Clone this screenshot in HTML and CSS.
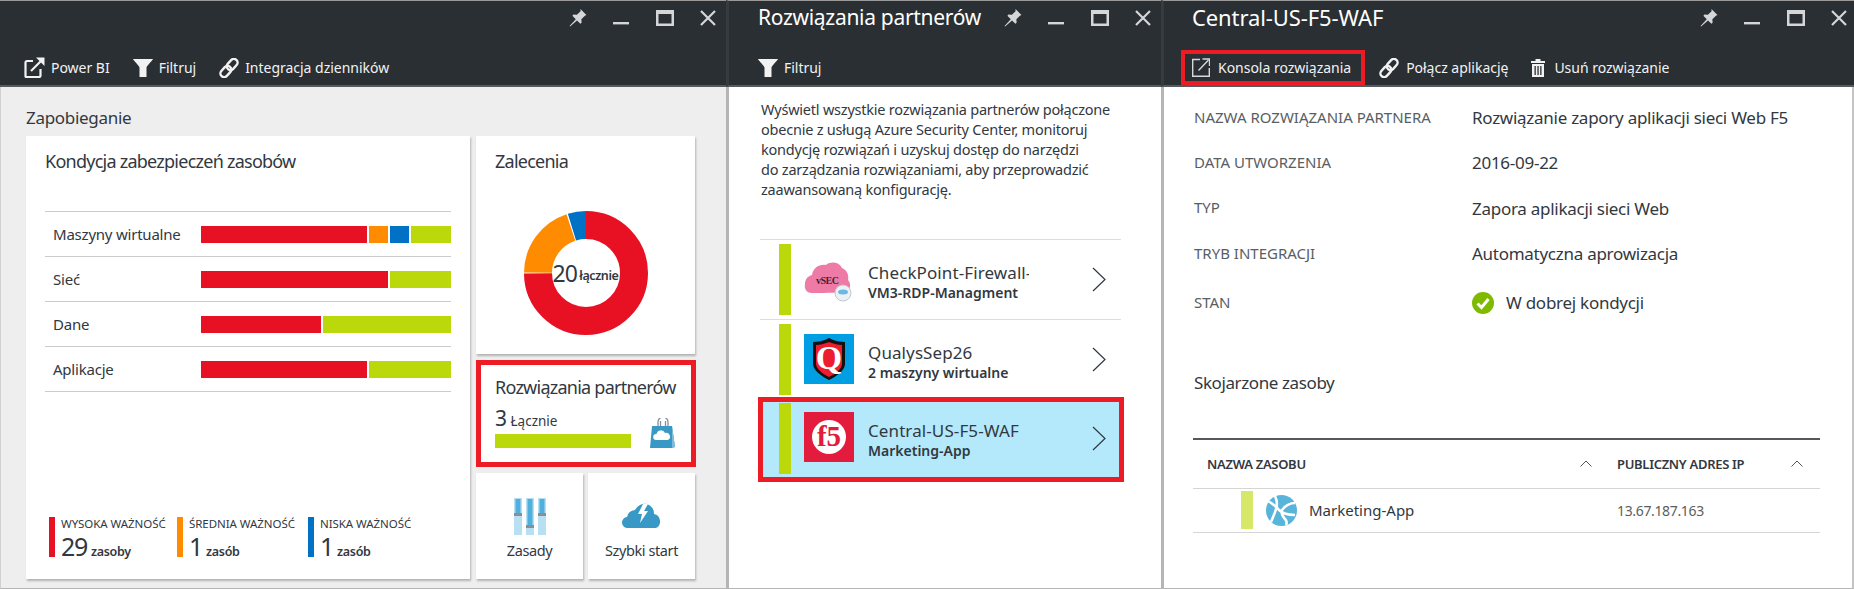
FILE: index.html
```html
<!DOCTYPE html>
<html lang="pl">
<head>
    <meta charset="UTF-8">
    <title>Rozwiązania partnerów</title>
    <link rel="stylesheet" href="styles.css">
</head>
<body>
    <svg class="defs" width="0" height="0">
        <symbol id="i-pin" viewBox="0 0 16 16"><path d="M10.2 0l5.3 5.300-1.300.6-3.200 3.300.2 3-1.100 1-3-3L1 15.500l-.5-.5L6 9 3 6l1-1.100 3 .2 3.300-3.200z"/></symbol>
        <symbol id="i-min" viewBox="0 0 16 16"><rect x="0" y="12" width="16" height="2.400"/></symbol>
        <symbol id="i-max" viewBox="0 0 18 16"><path fill-rule="evenodd" d="M0 0h18v16H0zM2.500 4v9.500h13V4z"/></symbol>
        <symbol id="i-close" viewBox="0 0 16 16"><path d="M1 1l14 14M15 1L1 15" fill="none" stroke="currentColor" stroke-width="2.200"/></symbol>
        <symbol id="i-filter" viewBox="0 0 20 18"><path d="M0 0h20c0 1-6.500 7-6.500 8.500V18h-7V8.500C6.500 7 0 1 0 0z"/></symbol>
        <symbol id="i-link" viewBox="0 0 20 20"><g transform="rotate(-48 10 10)" fill="none" stroke="currentColor" stroke-width="2.400"><rect x="-1" y="6.300" width="12.500" height="7.400" rx="3.700"/><rect x="8.500" y="6.300" width="12.500" height="7.400" rx="3.700"/></g></symbol>
    </svg>

    <section class="panel panel-first">
        <header class="panel-head">
            <div class="title-row">
                <div class="win-btns">
                    <span class="win-btn"><svg width="18" height="18"><use href="#i-pin"/></svg></span>
                    <span class="win-btn"><svg width="16" height="16"><use href="#i-min"/></svg></span>
                    <span class="win-btn"><svg width="18" height="16"><use href="#i-max"/></svg></span>
                    <span class="win-btn"><svg width="16" height="16"><use href="#i-close"/></svg></span>
                </div>
            </div>
            <div class="toolbar toolbar-first">
                <span class="tool">
                    <svg width="21" height="21" viewBox="0 0 21 21" fill="none" stroke="currentColor" stroke-width="2.200">
                        <path d="M9 4H3a1.500 1.500 0 0 0-1.500 1.500v13.500A1 1 0 0 0 3 20h12a1.500 1.500 0 0 0 1.500-1.500V12"/>
                        <path d="M7 14L17 4"/>
                        <path d="M12 0.500h8.500V9z" fill="currentColor" stroke="none"/>
                    </svg>
                    Power BI
                </span>
                <span class="tool"><svg width="20" height="18"><use href="#i-filter"/></svg>Filtruj</span>
                <span class="tool"><svg width="20" height="20"><use href="#i-link"/></svg>Integracja dzienników</span>
            </div>
        </header>
        <div class="panel-body body-grey">
            <h2 class="section-title">Zapobieganie</h2>
            <div class="dash">
                <div class="card card-health">
                    <h3 class="card-title">Kondycja zabezpieczeń zasobów</h3>
                    <div class="health-table">
                        <div class="health-row">
                            <span class="health-name">Maszyny wirtualne</span>
                            <div class="stack">
                                <i class="seg red" style="width:166px"></i><i class="seg orange" style="width:19px"></i><i class="seg blue" style="width:19px"></i><i class="seg green" style="width:40px"></i>
                            </div>
                        </div>
                        <div class="health-row">
                            <span class="health-name">Sieć</span>
                            <div class="stack"><i class="seg red" style="width:187px"></i><i class="seg green" style="width:61px"></i></div>
                        </div>
                        <div class="health-row">
                            <span class="health-name">Dane</span>
                            <div class="stack"><i class="seg red" style="width:120px"></i><i class="seg green" style="width:128px"></i></div>
                        </div>
                        <div class="health-row">
                            <span class="health-name">Aplikacje</span>
                            <div class="stack"><i class="seg red" style="width:166px"></i><i class="seg green" style="width:82px"></i></div>
                        </div>
                    </div>
                    <div class="legend">
                        <div class="legend-item">
                            <i class="legend-bar red"></i>
                            <div>
                                <div class="legend-label">WYSOKA WAŻNOŚĆ</div>
                                <div class="legend-count"><b>29</b> <span>zasoby</span></div>
                            </div>
                        </div>
                        <div class="legend-item">
                            <i class="legend-bar orange"></i>
                            <div>
                                <div class="legend-label">ŚREDNIA WAŻNOŚĆ</div>
                                <div class="legend-count"><b>1</b> <span>zasób</span></div>
                            </div>
                        </div>
                        <div class="legend-item">
                            <i class="legend-bar blue"></i>
                            <div>
                                <div class="legend-label">NISKA WAŻNOŚĆ</div>
                                <div class="legend-count"><b>1</b> <span>zasób</span></div>
                            </div>
                        </div>
                    </div>
                </div>
                <div class="side">
                    <div class="card card-rec">
                        <h3 class="card-title">Zalecenia</h3>
                        <div class="donut">
                            <svg width="124" height="124" viewBox="0 0 124 124" fill="none" stroke-width="28">
                                <g transform="rotate(-90 62 62)">
                                    <circle cx="62" cy="62" r="48" stroke="#e81123" stroke-dasharray="225.500 400"/>
                                    <circle cx="62" cy="62" r="48" stroke="#ff8c00" stroke-dasharray="59.500 400" stroke-dashoffset="-226.200"/>
                                    <circle cx="62" cy="62" r="48" stroke="#0072c6" stroke-dasharray="14.500 400" stroke-dashoffset="-286.800"/>
                                </g>
                            </svg>
                            <div class="donut-label"><b>20</b><span>łącznie</span></div>
                        </div>
                    </div>
                    <div class="card card-partner">
                        <h3 class="card-title">Rozwiązania partnerów</h3>
                        <div class="partner-meta">
                            <div>
                                <div class="partner-count"><b>3</b> Łącznie</div>
                                <div class="partner-bar"></div>
                            </div>
                            <svg width="26" height="30" viewBox="0 0 26 30">
                                <path d="M8 9V4a4 4 0 0 1 10 0v5M10.500 9V3M15.500 9V3" fill="none" stroke="#8a9097" stroke-width="1.300"/>
                                <path d="M2 8h20l3 21-3 1H0z" fill="#3999c6"/>
                                <path d="M22 8l3 21-3 1z" fill="#7fbcd9"/>
                                <path d="M6 22a3 3 0 0 1 .5-6 4.500 4.500 0 0 1 8.500-1 3.500 3.500 0 0 1 2.500 7z" fill="#fff"/>
                            </svg>
                        </div>
                    </div>
                    <div class="tiles">
                        <div class="card tile">
                            <svg width="40" height="37" viewBox="0 0 40 37">
                                <g fill="#b9dff2">
                                    <rect x="4" y="0" width="8" height="37"/><rect x="16" y="0" width="8" height="37"/><rect x="28" y="0" width="8" height="37"/>
                                </g>
                                <g fill="#4fb0de">
                                    <rect x="5.500" y="1" width="5" height="14"/><rect x="17.500" y="1" width="5" height="27"/><rect x="29.500" y="1" width="5" height="14"/>
                                </g>
                                <g fill="#8a8f94">
                                    <rect x="4" y="15" width="8" height="3"/><rect x="16" y="27" width="8" height="3"/><rect x="28" y="15" width="8" height="3"/>
                                </g>
                            </svg>
                            <span class="tile-name">Zasady</span>
                        </div>
                        <div class="card tile">
                            <svg width="40" height="37" viewBox="0 0 40 37">
                                <path d="M6 30a5.500 5.500 0 0 1-1-11 9 9 0 0 1 8-7 11 11 0 0 1 12-6 10 10 0 0 1 7 10 7.500 7.500 0 0 1 2 14z" fill="#3999c6"/>
                                <path d="M21 6l-5 10h4l-2 9 8-12h-4l4-7z" fill="#fff"/>
                            </svg>
                            <span class="tile-name">Szybki start</span>
                        </div>
                    </div>
                </div>
            </div>
        </div>
    </section>

    <section class="panel panel-second">
        <header class="panel-head">
            <div class="title-row">
                <h1 class="blade-title">Rozwiązania partnerów</h1>
                <div class="win-btns">
                    <span class="win-btn"><svg width="18" height="18"><use href="#i-pin"/></svg></span>
                    <span class="win-btn"><svg width="16" height="16"><use href="#i-min"/></svg></span>
                    <span class="win-btn"><svg width="18" height="16"><use href="#i-max"/></svg></span>
                    <span class="win-btn"><svg width="16" height="16"><use href="#i-close"/></svg></span>
                </div>
            </div>
            <div class="toolbar toolbar-second">
                <span class="tool"><svg width="20" height="18"><use href="#i-filter"/></svg>Filtruj</span>
            </div>
        </header>
        <div class="panel-body body-list">
            <p class="intro">Wyświetl wszystkie rozwiązania partnerów połączone<br>obecnie z usługą Azure Security Center, monitoruj<br>kondycję rozwiązań i uzyskuj dostęp do narzędzi<br>do zarządzania rozwiązaniami, aby przeprowadzić<br>zaawansowaną konfigurację.</p>
            <div class="partner-list">
                <div class="partner-row">
                    <i class="status-bar"></i>
                    <svg class="logo" width="50" height="50" viewBox="0 0 50 50">
                        <path d="M8 39c-6 0-8-5-7-9 0-5 3-8 7-9 1-7 7-11 14-10 5-4 13-3 16 3 5 2 7 7 6 12 3 3 3 9-1 11-2 2-30 2-35 2z" fill="#ee7ba5"/>
                        <text x="12" y="30" class="logo-vsec">vSEC</text>
                        <circle cx="39" cy="39" r="8" fill="#eef1f3" stroke="#c4c8cb"/>
                        <ellipse cx="39" cy="38" rx="5" ry="2.500" fill="#6cb8e8"/>
                    </svg>
                    <div class="partner-text">
                        <div class="partner-name name-clipped">CheckPoint-Firewall-Gateway</div>
                        <div class="partner-sub">VM3-RDP-Managment</div>
                    </div>
                    <svg class="chevron" width="14" height="25" viewBox="0 0 14 25"><path d="M1 1l12 11.500L1 24" fill="none" stroke="#32383f" stroke-width="1.200"/></svg>
                </div>
                <div class="partner-row">
                    <i class="status-bar"></i>
                    <svg class="logo" width="50" height="50" viewBox="0 0 50 50">
                        <rect width="50" height="50" fill="#009fe3"/>
                        <path d="M25 4c6 3 11 4 16 4v22c0 6-8 12-16 16C17 42 9 36 9 30V8c5 0 10-1 16-4z" fill="#111"/>
                        <path d="M25 8c5 2 9 3 13 3v19c0 5-7 10-13 13-6-3-13-8-13-13V11c4 0 8-1 13-3z" fill="#ed1c2e"/>
                        <text x="25" y="35" class="logo-q">Q</text>
                    </svg>
                    <div class="partner-text">
                        <div class="partner-name">QualysSep26</div>
                        <div class="partner-sub">2 maszyny wirtualne</div>
                    </div>
                    <svg class="chevron" width="14" height="25" viewBox="0 0 14 25"><path d="M1 1l12 11.500L1 24" fill="none" stroke="#32383f" stroke-width="1.200"/></svg>
                </div>
                <div class="partner-row row-selected">
                    <i class="status-bar"></i>
                    <svg class="logo" width="50" height="50" viewBox="0 0 50 50">
                        <rect width="50" height="50" fill="#e31c3d"/>
                        <circle cx="25" cy="25" r="17" fill="#fff"/>
                        <text x="25" y="34" class="logo-f5">f5</text>
                    </svg>
                    <div class="partner-text">
                        <div class="partner-name">Central-US-F5-WAF</div>
                        <div class="partner-sub">Marketing-App</div>
                    </div>
                    <svg class="chevron" width="14" height="25" viewBox="0 0 14 25"><path d="M1 1l12 11.500L1 24" fill="none" stroke="#32383f" stroke-width="1.200"/></svg>
                </div>
            </div>
        </div>
    </section>

    <section class="panel panel-third">
        <header class="panel-head">
            <div class="title-row">
                <h1 class="blade-title">Central-US-F5-WAF</h1>
                <div class="win-btns">
                    <span class="win-btn"><svg width="18" height="18"><use href="#i-pin"/></svg></span>
                    <span class="win-btn"><svg width="16" height="16"><use href="#i-min"/></svg></span>
                    <span class="win-btn"><svg width="18" height="16"><use href="#i-max"/></svg></span>
                    <span class="win-btn"><svg width="16" height="16"><use href="#i-close"/></svg></span>
                </div>
            </div>
            <div class="toolbar toolbar-third">
                <span class="tool tool-marked">
                    <svg width="18" height="19" viewBox="0 0 18 19" fill="none" stroke="#d8d8d8" stroke-width="1.400">
                        <path d="M8 1.500H.7v16.800h16.600V10"/>
                        <path d="M6.500 12.500L16.500 2"/>
                        <path d="M10.500 1h7v7"/>
                    </svg>
                    Konsola rozwiązania
                </span>
                <span class="tool"><svg width="20" height="20"><use href="#i-link"/></svg>Połącz aplikację</span>
                <span class="tool tool-trash">
                    <svg width="14" height="18" viewBox="0 0 14 18">
                        <path d="M4.500 0h5v2H14v2H0V2h4.500z"/>
                        <path fill-rule="evenodd" d="M1 5h12v13H1zM3.500 7v9h1.300V7zM6.400 7v9h1.300V7zM9.200 7v9h1.300V7z"/>
                    </svg>
                    Usuń rozwiązanie
                </span>
            </div>
        </header>
        <div class="panel-body body-detail">
            <dl class="props">
                <dt>NAZWA ROZWIĄZANIA PARTNERA</dt>
                <dd>Rozwiązanie zapory aplikacji sieci Web F5</dd>
                <dt>DATA UTWORZENIA</dt>
                <dd>2016-09-22</dd>
                <dt>TYP</dt>
                <dd>Zapora aplikacji sieci Web</dd>
                <dt>TRYB INTEGRACJI</dt>
                <dd>Automatyczna aprowizacja</dd>
                <dt class="prop-last">STAN</dt>
                <dd class="prop-last prop-state">
                    <svg width="22" height="22" viewBox="0 0 22 22">
                        <circle cx="11" cy="11" r="11" fill="#7fba00"/>
                        <path d="M5.500 11.500l4 4 7-8.500" fill="none" stroke="#fff" stroke-width="3"/>
                    </svg>
                    W dobrej kondycji
                </dd>
            </dl>
            <h2 class="linked-title">Skojarzone zasoby</h2>
            <div class="res-table">
                <div class="res-head">
                    <span class="res-th th-name">NAZWA ZASOBU
                        <svg width="12" height="7" viewBox="0 0 12 7"><path d="M.5 6.500L6 1l5.500 5.500" fill="none" stroke="#555" /></svg>
                    </span>
                    <span class="res-th th-ip">PUBLICZNY ADRES IP
                        <svg width="12" height="7" viewBox="0 0 12 7"><path d="M.5 6.500L6 1l5.500 5.500" fill="none" stroke="#555" /></svg>
                    </span>
                </div>
                <div class="res-row">
                    <div class="res-name">
                        <i class="res-bar"></i>
                        <svg width="31" height="31" viewBox="0 0 31 31">
                            <circle cx="15.500" cy="15.500" r="15.500" fill="#59b4d9"/>
                            <path d="M2 6c5 3 8 5 11 9 3 3 8 5 16 5M9 1c2 4 3 7 1 13-1 4-3 8-5 13M29 8c-5 0-10 3-13 7-1 2 0 6 3 9 2 2 2 4 1 6" fill="none" stroke="#fff" stroke-width="2.600"/>
                        </svg>
                        Marketing-App
                    </div>
                    <div class="res-ip">13.67.187.163</div>
                </div>
            </div>
        </div>
    </section>
</body>
</html>
```

FILE: styles.css
```css
* {
    box-sizing: border-box;
}
html, body {
    margin: 0;
    height: 589px;
    overflow: hidden;
}
body {
    display: flex;
    font-family: "Noto Sans", sans-serif;
    color: #32383f;
    background: #fff;
}
h1, h2, h3, p, dl, dd {
    margin: 0;
    font-weight: 400;
}
i {
    display: block;
}
.defs {
    position: absolute;
}

/* blades */
.panel {
    display: flex;
    flex-direction: column;
    height: 589px;
}
.panel-first {
    width: 726px;
}
.panel-second {
    width: 435px;
}
.panel-third {
    flex: 1;
}
.panel-head {
    height: 87px;
    background: #2a2f34;
    border-top: 1px solid #9a9a9a;
    border-bottom: 2px solid #555a5e;
    color: #fff;
}
.panel-second .panel-head,
.panel-third .panel-head {
    border-left: 3px solid #363b40;
}
.panel-body {
    flex: 1;
    border-bottom: 1px solid #b5b5b5;
}
.title-row {
    display: flex;
    height: 49px;
    padding-left: 29px;
}
.blade-title {
    font-size: 21px;
    line-height: 33px;
    letter-spacing: -0.3px;
}
.panel-third .blade-title {
    margin-left: -1px;
    font-size: 22px;
    letter-spacing: -0.1px;
}
.win-btns {
    display: flex;
    height: 33px;
    margin-left: auto;
    margin-right: -4px;
    color: #d4d6d8;
}
.panel-third .win-btns {
    margin-right: -7px;
}
.win-btn {
    display: flex;
    align-items: center;
    justify-content: center;
    width: 43.5px;
}
.win-btn svg {
    fill: currentColor;
}
.toolbar {
    display: flex;
    align-items: center;
    height: 35px;
    font-size: 14px;
    letter-spacing: -0.02px;
    color: #f2f2f2;
    fill: currentColor;
}
.toolbar-first {
    padding-left: 24px;
    gap: 23px;
}
.toolbar-second {
    padding-left: 29px;
}
.toolbar-third {
    padding-left: 17px;
    gap: 14px;
}
.tool {
    display: flex;
    align-items: center;
    gap: 6px;
    white-space: nowrap;
}
.toolbar-third .tool {
    gap: 7px;
}
.tool svg {
    flex: none;
}
.toolbar-third .tool-marked {
    height: 35px;
    gap: 8px;
    padding: 0 10px 0 7px;
    border: 4px solid #ed1c24;
}
.toolbar-third .tool-trash {
    gap: 9px;
    margin-left: 9px;
}

/* first blade */
.body-grey {
    padding-left: 25px;
    background: #eeeeee;
    border-left: 1px solid #d0d0d0;
}
.section-title {
    margin-top: 20px;
    font-size: 17px;
    line-height: 22px;
    letter-spacing: -0.3px;
}
.dash {
    display: grid;
    grid-template-columns: 444px 220px;
    column-gap: 6px;
    margin-top: 7px;
    height: 443px;
}
.card {
    background: #fff;
    box-shadow: 1px 2px 2px rgba(0, 0, 0, 0.25);
}
.card-title {
    font-size: 18px;
    line-height: 24px;
    letter-spacing: -0.75px;
}
.card-health {
    display: flex;
    flex-direction: column;
    padding: 13px 19px 22px;
}
.health-table {
    margin-top: 38px;
    border-bottom: 1px solid #ccc;
}
.health-row {
    display: flex;
    align-items: center;
    height: 45px;
    border-top: 1px solid #ccc;
}
.health-name {
    flex: none;
    width: 156px;
    padding-left: 8px;
    font-size: 15px;
    letter-spacing: -0.22px;
}
.stack {
    display: flex;
    gap: 2px;
}
.seg {
    height: 17px;
}
.red {
    background: #e81123;
}
.orange {
    background: #ff8c00;
}
.blue {
    background: #0072c6;
}
.green {
    background: #bad80a;
}
.legend {
    display: grid;
    grid-template-columns: 128px 131px auto;
    margin: auto 0 0 4px;
}
.legend-item {
    display: flex;
    gap: 6px;
    height: 40px;
}
.legend-bar {
    width: 6px;
    height: 40px;
}
.legend-label {
    font-size: 11.5px;
    line-height: 13px;
    letter-spacing: -0.05px;
    white-space: nowrap;
}
.legend-count {
    line-height: 26px;
    margin-top: 3px;
}
.legend-count b {
    font-size: 25px;
    font-weight: 400;
    letter-spacing: -1.4px;
}
.legend-count span {
    font-size: 12.5px;
    font-weight: 600;
    letter-spacing: -0.3px;
}
.side {
    display: flex;
    flex-direction: column;
    gap: 6px;
}
.card-rec {
    height: 218px;
    margin-right: 1px;
    padding: 13px 19px 0;
}
.donut {
    position: relative;
    width: 124px;
    height: 124px;
    margin: 38px auto 0;
}
.donut-label {
    position: absolute;
    inset: 0;
    display: flex;
    align-items: center;
    justify-content: center;
    gap: 2px;
    color: #32383f;
    white-space: nowrap;
}
.donut-label b {
    font-size: 23px;
    font-weight: 400;
    letter-spacing: -0.8px;
}
.donut-label span {
    padding-top: 5px;
    font-size: 12.5px;
    font-weight: 600;
    letter-spacing: -0.4px;
}
.card-partner {
    height: 107px;
    padding: 10px 0 0 14px;
    border: 5px solid #ed1c24;
    box-shadow: none;
}
.partner-meta {
    display: flex;
    align-items: flex-end;
    justify-content: space-between;
    padding-right: 15px;
}
.partner-count {
    font-size: 13.500px;
    line-height: 24px;
    margin-top: 7px;
    letter-spacing: 0;
}
.partner-count b {
    font-size: 21px;
    font-weight: 400;
}
.partner-bar {
    width: 136px;
    height: 14px;
    margin-top: 1px;
    background: #bad80a;
}
.tiles {
    display: flex;
    gap: 5px;
    height: 106px;
    margin-right: 1px;
}
.tile {
    flex: 1;
    display: flex;
    flex-direction: column;
    align-items: center;
    padding-top: 25px;
}
.tile-name {
    margin-top: 5px;
    font-size: 14.500px;
    line-height: 20px;
    letter-spacing: -0.4px;
}

/* second blade */
.panel-second .panel-body,
.panel-third .panel-body {
    border-left: 3px solid #b5b5b5;
}
.body-list {
    padding: 12px 40px 0 31px;
}
.intro {
    padding-left: 1px;
    font-size: 14.500px;
    line-height: 20px;
    letter-spacing: -0.22px;
    white-space: nowrap;
}
.partner-list {
    margin-top: 40px;
}
.partner-row {
    position: relative;
    display: flex;
    align-items: center;
    height: 80px;
    border-top: 1px solid #ddd;
}
.status-bar {
    width: 12px;
    height: 71px;
    margin-left: 19px;
    background: #bad80a;
}
.logo {
    flex: none;
    margin-left: 13px;
    margin-top: -2px;
}
.partner-text {
    width: 161px;
    margin: 6px 0 0 14px;
    white-space: nowrap;
}
.partner-name {
    font-size: 17px;
    line-height: 20px;
    letter-spacing: 0.1px;
}
.name-clipped {
    overflow: hidden;
    line-height: 24px;
    margin: -2px 0;
}
.partner-sub {
    font-size: 14px;
    font-weight: 600;
    line-height: 20px;
}
.chevron {
    margin-left: auto;
    margin-right: 15px;
}
.row-selected {
    background: #b3e9fa;
    border-top: 0;
    border-bottom: 2px solid #b5c8d0;
}
.row-selected::after {
    content: "";
    position: absolute;
    inset: -2px -3px -5px -2px;
    border: 5px solid #ed1c24;
}
.logo-vsec {
    font-family: "Liberation Serif", serif;
    font-size: 10px;
    font-weight: 700;
    fill: #4a2035;
    letter-spacing: -0.5px;
}
.logo-q {
    font-family: "Liberation Serif", serif;
    font-size: 34px;
    font-weight: 700;
    fill: #fff;
    text-anchor: middle;
}
.logo-f5 {
    font-family: "Liberation Serif", serif;
    font-size: 29px;
    font-weight: 700;
    fill: #e31c3d;
    text-anchor: middle;
}

/* third blade */
.body-detail {
    padding: 7px 0 0 30px;
    border-right: 2px solid #c4c4c4;
}
.props {
    display: grid;
    grid-template-columns: 278px auto;
    grid-auto-rows: 45.3px;
    align-items: center;
    white-space: nowrap;
}
.props dt {
    font-size: 15px;
    color: #595e63;
}
.props dd {
    padding-top: 2px;
    font-size: 17px;
    letter-spacing: -0.27px;
}
.prop-last {
    margin-top: 8px;
}
.prop-state {
    display: flex;
    align-items: center;
    gap: 12px;
}
.linked-title {
    margin-top: 50.5px;
    font-size: 17px;
    line-height: 24px;
    letter-spacing: -0.4px;
}
.res-table {
    width: 627px;
    margin: 43px 0 0 -1px;
    border-top: 2px solid #55595e;
}
.res-head {
    display: grid;
    grid-template-columns: 424px auto;
    height: 48px;
    font-size: 13px;
    font-weight: 600;
    letter-spacing: -0.3px;
}
.res-th {
    display: flex;
    align-items: center;
    justify-content: space-between;
}
.th-name {
    padding: 0 25px 0 14px;
}
.th-ip {
    padding-right: 17px;
}
.res-row {
    display: grid;
    grid-template-columns: 424px auto;
    align-items: center;
    height: 45px;
    border-top: 1px solid #d5d5d5;
    border-bottom: 1px solid #d5d5d5;
}
.res-name {
    display: flex;
    align-items: center;
    gap: 12px;
    padding-left: 48px;
    font-size: 15px;
}
.res-bar {
    width: 12px;
    height: 38px;
    margin-right: 1px;
    background: #d6e86a;
}
.res-ip {
    font-size: 14px;
    letter-spacing: -0.35px;
    color: #595e63;
}
```
